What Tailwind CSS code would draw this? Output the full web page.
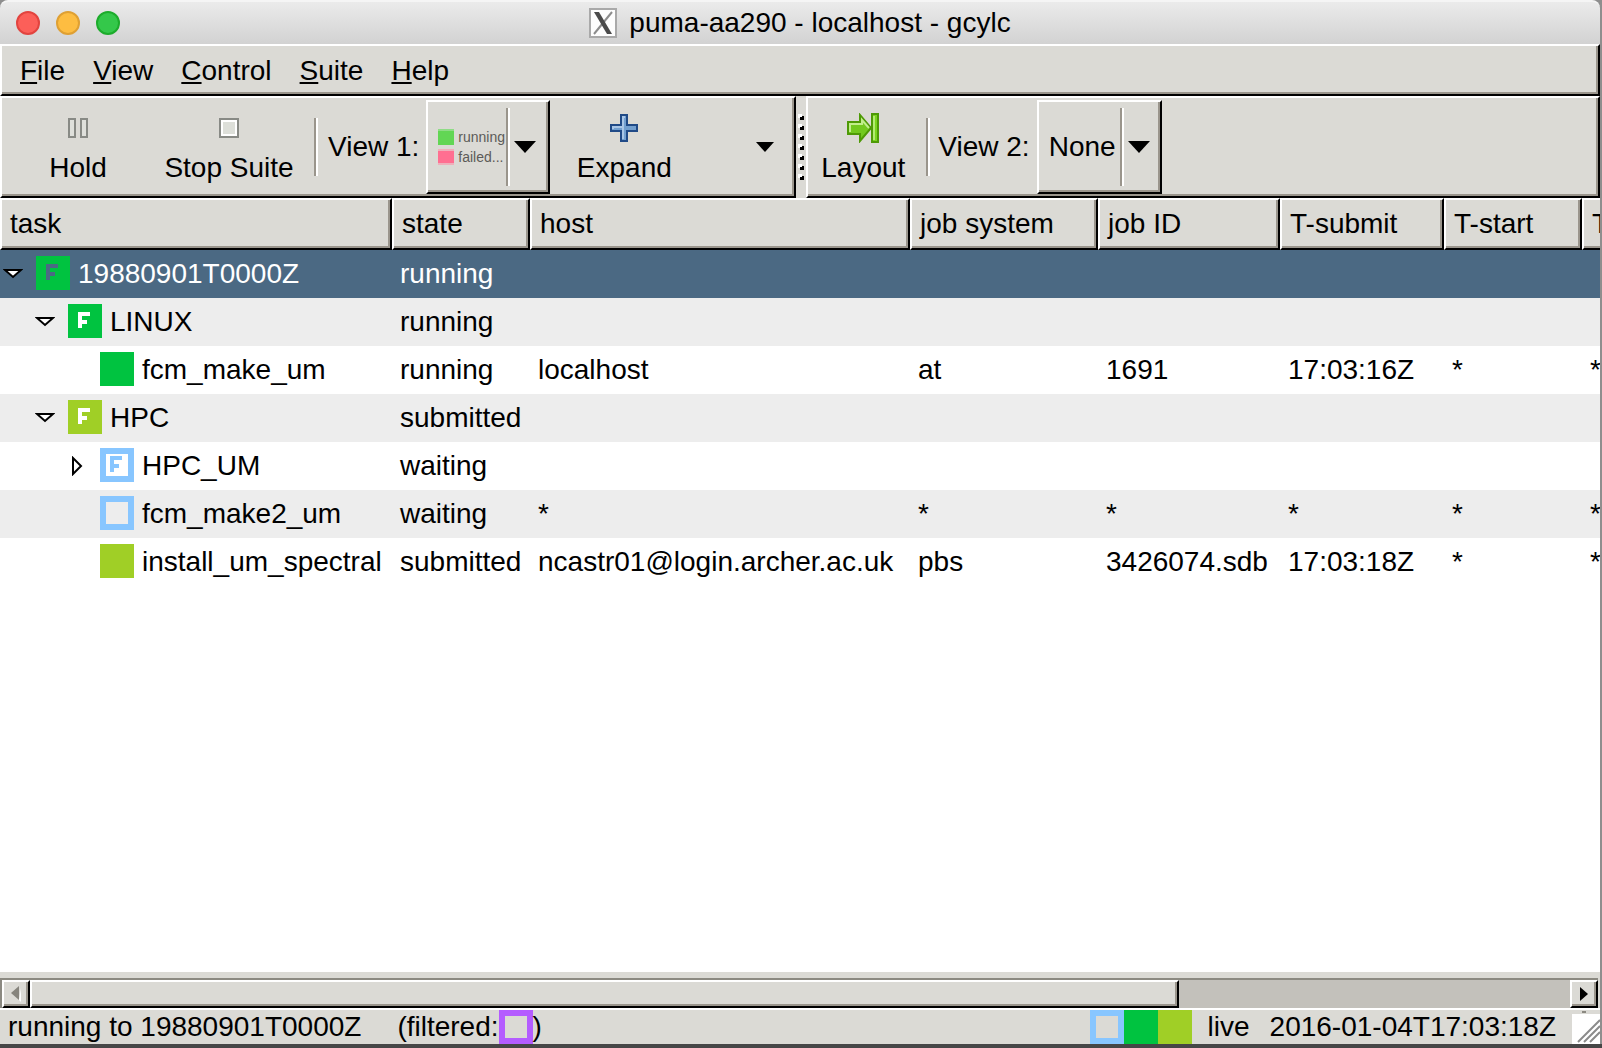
<!DOCTYPE html>
<html lang="en">
<head>
<meta charset="utf-8">
<title>puma-aa290 - localhost - gcylc</title>
<script src="https://cdn.jsdelivr.net/npm/@tailwindcss/browser@4"></script>
</head>
<body class="bg-[#8e8e8e] font-['Liberation_Sans',Arial,sans-serif] text-[28px] leading-8 text-black">
<div class="flex h-screen flex-col overflow-hidden border-b-4 border-[#464646] pr-0.5">

  <!-- Title bar -->
  <header class="relative flex h-11 shrink-0 items-center rounded-t-lg border-t-2 border-[#f5f5f5] bg-linear-to-b from-[#ebebeb] to-[#d2d2d2]">
    <div class="absolute left-4 flex gap-4">
      <button aria-label="Close" class="size-6 rounded-full border-2 border-[#e2443f] bg-[#fc5f59]"></button>
      <button aria-label="Minimize" class="size-6 rounded-full border-2 border-[#dfa033] bg-[#fdbd41]"></button>
      <button aria-label="Zoom" class="size-6 rounded-full border-2 border-[#1dac2c] bg-[#34c84a]"></button>
    </div>
    <div class="flex flex-1 items-center justify-center gap-3">
      <svg class="h-[30px] w-7" viewBox="0 0 28 30" aria-hidden="true">
        <rect x="1" y="1" width="26" height="28" fill="#fdfdfd" stroke="#a9a9a9" stroke-width="2"/>
        <path d="M23 4 L5 26" stroke="#8c8c8c" stroke-width="2"/>
        <path d="M5 4 H10 L23 26 H18Z" fill="#4a4a4a"/>
      </svg>
      <h1>puma-aa290 - localhost - gcylc</h1>
    </div>
  </header>

  <!-- Menu bar -->
  <nav class="flex h-[52px] shrink-0 items-center gap-7 border-2 border-t-white border-r-black border-b-black border-l-white bg-[#dbdad5] pt-px pl-[18px] shadow-[inset_-2px_-2px_0_#9a958c]">
    <button><span class="underline decoration-2 underline-offset-2">F</span>ile</button>
    <button><span class="underline decoration-2 underline-offset-2">V</span>iew</button>
    <button><span class="underline decoration-2 underline-offset-2">C</span>ontrol</button>
    <button><span class="underline decoration-2 underline-offset-2">S</span>uite</button>
    <button><span class="underline decoration-2 underline-offset-2">H</span>elp</button>
  </nav>

  <!-- Toolbars -->
  <div class="flex h-[102px] shrink-0 bg-[#dbdad5]">
    <div class="flex shrink-0 items-center border-2 border-t-white border-r-black border-b-black border-l-white shadow-[inset_-2px_-2px_0_#9a958c]">
      <button class="flex w-[152px] flex-col items-center gap-1 self-start pt-2.5">
        <span class="flex h-10 items-center">
          <svg class="size-5" viewBox="0 0 20 20" aria-hidden="true"><path d="M1 1h6v18H1zM13 1h6v18h-6z" fill="#dfe0db" stroke="#888a85" stroke-width="2"/></svg>
        </span>
        Hold
      </button>
      <button class="flex w-[150px] flex-col items-center gap-1 self-start pt-2.5">
        <span class="flex h-10 items-center">
          <svg class="size-5" viewBox="0 0 20 20" aria-hidden="true"><rect x="1" y="1" width="18" height="18" fill="#dddfd9" stroke="#888a85" stroke-width="2"/><rect x="3" y="3" width="14" height="14" fill="none" stroke="#fff" stroke-width="2"/></svg>
        </span>
        Stop Suite
      </button>
      <div class="mx-2.5 h-[58px] w-1 border-r-2 border-l-2 border-l-[#9a958c] border-r-white"></div>
      <span id="view1">View 1:</span>
      <button aria-labelledby="view1" class="ml-[7px] flex h-[94px] w-[124px] items-center border-2 border-t-white border-r-black border-b-black border-l-white pl-2.5 text-sm text-[#5c5b58] shadow-[inset_-2px_-2px_0_#9a958c]">
        <span class="grid w-[68px] shrink-0 grid-cols-[16px_1fr] items-center gap-x-1 gap-y-1 text-left leading-4">
          <span class="h-4 border-t-2 border-[#8fdc86] bg-[#62d654]"></span><span>running</span>
          <span class="h-4 border-y-2 border-[#eeb0bb] bg-[#ff6f91]"></span><span>failed...</span>
        </span>
        <span class="h-[78px] w-1 shrink-0 border-r-2 border-l-2 border-l-[#9a958c] border-r-white"></span>
        <svg class="ml-1 h-3 w-[22px] shrink-0" viewBox="0 0 22 12" aria-hidden="true"><path d="M0 0H22L11 12Z"/></svg>
      </button>
      <button class="flex w-[148px] flex-col items-center gap-1 self-start pt-2.5">
        <span class="flex h-10 items-center">
          <svg class="size-7" viewBox="0 0 28 28" aria-hidden="true"><path d="M11 1h6v10h10v6H17v10h-6V17H1v-6h10z" fill="#729fcf" stroke="#204a87" stroke-width="2"/><path d="M13 25V3h2M3 15v-2h10" fill="none" stroke="#a9c6e6" stroke-width="2"/></svg>
        </span>
        Expand
      </button>
      <button aria-label="Expand options" class="ml-[38px] flex h-[94px] w-[58px] items-center justify-center">
        <svg class="h-2.5 w-[18px]" viewBox="0 0 18 10" aria-hidden="true"><path d="M0 0H18L9 10Z"/></svg>
      </button>
    </div>
    <div class="flex w-2.5 shrink-0 items-center justify-center">
      <svg class="h-[66px] w-1.5" viewBox="0 0 6 66" aria-hidden="true">
        <path d="M2 4h4M2 14h4M2 24h4M2 34h4M2 44h4M2 54h4M2 64h4" stroke="#000" stroke-width="4"/>
        <path d="M0 2h4M0 12h4M0 22h4M0 32h4M0 42h4M0 52h4M0 62h4" stroke="#fff" stroke-width="4"/>
        <path d="M2 4h2M2 14h2M2 24h2M2 34h2M2 44h2M2 54h2M2 64h2" stroke="#000" stroke-width="2"/>
      </svg>
    </div>
    <div class="flex flex-1 items-center border-2 border-t-white border-r-black border-b-black border-l-white shadow-[inset_-2px_-2px_0_#9a958c]">
      <button class="flex w-[110px] flex-col items-center gap-1 self-start pt-2.5">
        <span class="flex h-10 items-center">
          <svg class="h-[30px] w-8" viewBox="0 0 32 30" aria-hidden="true"><path d="M1 9h12V2l11 13-11 13v-7H1z" fill="#73c91f" stroke="#4e9a06" stroke-width="2"/><path d="M3 19V11h12V7l7 8" fill="none" stroke="#c1ee8c" stroke-width="2"/><rect x="25" y="1" width="6" height="28" fill="#7ad41f" stroke="#4e9a06" stroke-width="2"/><path d="M27 3v24" stroke="#b4ec72" stroke-width="2"/></svg>
        </span>
        Layout
      </button>
      <div class="mx-2 h-[58px] w-1 border-r-2 border-l-2 border-l-[#9a958c] border-r-white"></div>
      <label for="view2">View 2:</label>
      <div class="relative ml-[7px] h-[94px] w-[125px]">
        <select id="view2" class="size-full appearance-none border-2 border-t-white border-r-black border-b-black border-l-white pl-2.5 shadow-[inset_-2px_-2px_0_#9a958c]"><option>None</option></select>
        <div class="pointer-events-none absolute inset-y-0 right-3 flex items-center gap-1">
          <span class="h-[78px] w-1 border-r-2 border-l-2 border-l-[#9a958c] border-r-white"></span>
          <svg class="h-3 w-[22px]" viewBox="0 0 22 12" aria-hidden="true"><path d="M0 0H22L11 12Z"/></svg>
        </div>
      </div>
    </div>
  </div>

  <!-- Task tree -->
  <main class="flex-1 overflow-hidden bg-white">
    <table class="w-full table-fixed border-separate border-spacing-0 text-left whitespace-nowrap">
      <colgroup>
        <col class="w-[392px]"><col class="w-[138px]"><col class="w-[380px]"><col class="w-[188px]"><col class="w-[182px]"><col class="w-[164px]"><col class="w-[138px]"><col>
      </colgroup>
      <thead>
        <tr class="h-[52px] bg-[#dbdad5] *:border-2 *:border-t-white *:border-r-black *:border-b-black *:border-l-white *:px-2 *:font-normal *:shadow-[inset_-2px_-2px_0_#9a958c]">
          <th>task</th><th>state</th><th>host</th><th>job system</th><th>job ID</th><th>T-submit</th><th>T-start</th><th class="overflow-hidden border-r-0! pr-0! shadow-[inset_0_-2px_0_#9a958c]!">T</th>
        </tr>
      </thead>
      <tbody class="leading-[48px]">
        <tr class="h-12 bg-[#4b6983] text-white">
          <td><div class="flex h-12">
            <button aria-label="Collapse" class="w-9 pl-[3px]"><svg class="h-3 w-5" viewBox="0 0 20 12" aria-hidden="true"><path d="M2 2H18L10 9Z" fill="#fff" stroke="#000" stroke-width="2"/></svg></button>
            <svg class="mt-1.5 mr-2 size-[34px]" viewBox="0 0 34 34" aria-hidden="true"><path d="M0 0h34v34H0z" fill="#00c340"/><path d="M10 8h12v4h-8v4h5v4h-5v4h-4z" fill="#4b6983"/></svg>19880901T0000Z</div></td>
          <td class="pl-2">running</td><td></td><td></td><td></td><td></td><td></td><td></td>
        </tr>
        <tr class="h-12 bg-[#ededed]">
          <td><div class="flex h-12 pl-8">
            <button aria-label="Collapse" class="w-9 pl-[3px]"><svg class="h-3 w-5" viewBox="0 0 20 12" aria-hidden="true"><path d="M2 2H18L10 9Z" fill="#fff" stroke="#000" stroke-width="2"/></svg></button>
            <svg class="mt-1.5 mr-2 size-[34px]" viewBox="0 0 34 34" aria-hidden="true"><path d="M0 0h34v34H0z" fill="#00c340"/><path d="M10 8h12v4h-8v4h5v4h-5v4h-4z" fill="#fff"/></svg>LINUX</div></td>
          <td class="pl-2">running</td><td></td><td></td><td></td><td></td><td></td><td></td>
        </tr>
        <tr class="h-12">
          <td><div class="flex h-12 pl-[100px]"><span class="mt-1.5 mr-2 size-[34px] bg-[#00c340]"></span>fcm_make_um</div></td>
          <td class="pl-2">running</td><td class="pl-2">localhost</td><td class="pl-2">at</td><td class="pl-2">1691</td><td class="pl-2">17:03:16Z</td><td class="pl-2">*</td><td class="overflow-hidden pl-2">*</td>
        </tr>
        <tr class="h-12 bg-[#ededed]">
          <td><div class="flex h-12 pl-8">
            <button aria-label="Collapse" class="w-9 pl-[3px]"><svg class="h-3 w-5" viewBox="0 0 20 12" aria-hidden="true"><path d="M2 2H18L10 9Z" fill="#fff" stroke="#000" stroke-width="2"/></svg></button>
            <svg class="mt-1.5 mr-2 size-[34px]" viewBox="0 0 34 34" aria-hidden="true"><path d="M0 0h34v34H0z" fill="#a0cf26"/><path d="M10 8h12v4h-8v4h5v4h-5v4h-4z" fill="#fff"/></svg>HPC</div></td>
          <td class="pl-2">submitted</td><td></td><td></td><td></td><td></td><td></td><td></td>
        </tr>
        <tr class="h-12">
          <td><div class="flex h-12 pl-16">
            <button aria-label="Expand" class="w-9 pl-[3px]"><svg class="h-5 w-5" viewBox="0 0 20 20" aria-hidden="true"><path d="M6 2V18L14 10Z" fill="#fff" stroke="#000" stroke-width="2"/></svg></button>
            <svg class="mt-1.5 mr-2 size-[34px]" viewBox="0 0 34 34" aria-hidden="true"><path d="M3 3h28v28H3z" fill="#fff" stroke="#88c6ff" stroke-width="6"/><path d="M10 8h12v4h-8v4h5v4h-5v4h-4z" fill="#88c6ff"/></svg>HPC_UM</div></td>
          <td class="pl-2">waiting</td><td></td><td></td><td></td><td></td><td></td><td></td>
        </tr>
        <tr class="h-12 bg-[#ededed]">
          <td><div class="flex h-12 pl-[100px]"><span class="mt-1.5 mr-2 size-[34px] border-6 border-[#88c6ff]"></span>fcm_make2_um</div></td>
          <td class="pl-2">waiting</td><td class="pl-2">*</td><td class="pl-2">*</td><td class="pl-2">*</td><td class="pl-2">*</td><td class="pl-2">*</td><td class="overflow-hidden pl-2">*</td>
        </tr>
        <tr class="h-12">
          <td><div class="flex h-12 pl-[100px]"><span class="mt-1.5 mr-2 size-[34px] bg-[#a0cf26]"></span>install_um_spectral</div></td>
          <td class="pl-2">submitted</td><td class="pl-2">ncastr01@login.archer.ac.uk</td><td class="pl-2">pbs</td><td class="pl-2">3426074.sdb</td><td class="pl-2">17:03:18Z</td><td class="pl-2">*</td><td class="overflow-hidden pl-2">*</td>
        </tr>
      </tbody>
    </table>
  </main>

  <!-- Horizontal scrollbar -->
  <div class="shrink-0 border-b-2 border-b-white bg-[#dbdad5] pt-1.5 pr-0.5">
    <div class="flex h-[30px] border-t-2 border-l-2 border-[#8b8981] bg-[#c3c1bb]">
      <button aria-label="Scroll left" class="flex w-7 items-center justify-center border-2 border-t-white border-r-black border-b-black border-l-white bg-[#dbdad5] shadow-[inset_-2px_-2px_0_#9a958c]">
        <svg class="h-4 w-2.5" viewBox="0 0 10 16" aria-hidden="true"><path d="M10 2V16L8 14" fill="#fff"/><path d="M8 0V14L0 7Z" fill="#86847d"/></svg>
      </button>
      <div class="flex-1"><div class="h-full border-2 border-t-white border-r-black border-b-black border-l-white bg-[#dbdad5] shadow-[inset_-2px_-2px_0_#9a958c]" style="width: 74.6%"></div></div>
      <button aria-label="Scroll right" class="flex w-7 items-center justify-center border-2 border-t-white border-r-black border-b-black border-l-white bg-[#dbdad5] shadow-[inset_-2px_-2px_0_#9a958c]">
        <svg class="h-3.5 w-2" viewBox="0 0 8 14" aria-hidden="true"><path d="M0 0V14L8 7Z"/></svg>
      </button>
    </div>
  </div>

  <!-- Status bar -->
  <footer class="flex h-[34px] shrink-0 items-center bg-[#dbdad5] pl-2 whitespace-nowrap">
    <span>running to 19880901T0000Z</span>
    <span class="ml-9 flex items-center">(filtered:<span class="size-[34px] border-6 border-[#b45cff]"></span>)</span>
    <span class="ml-auto flex">
      <span class="size-[34px] border-6 border-[#88c6ff]"></span>
      <span class="size-[34px] bg-[#00c340]"></span>
      <span class="size-[34px] bg-[#a0cf26]"></span>
    </span>
    <span class="ml-4">live</span>
    <span class="mr-4 ml-5">2016-01-04T17:03:18Z</span>
    <svg class="h-[34px] w-7" viewBox="0 0 28 34" aria-hidden="true"><path d="M0 4h28v30H0z" fill="#fff"/><path d="M10 2h4" stroke="#8b8981" stroke-width="2"/><path d="M6 32 28 10M12 32 28 16M18 32 28 22" stroke="#8b8b8b" stroke-width="2"/></svg>
  </footer>
</div>
</body>
</html>
